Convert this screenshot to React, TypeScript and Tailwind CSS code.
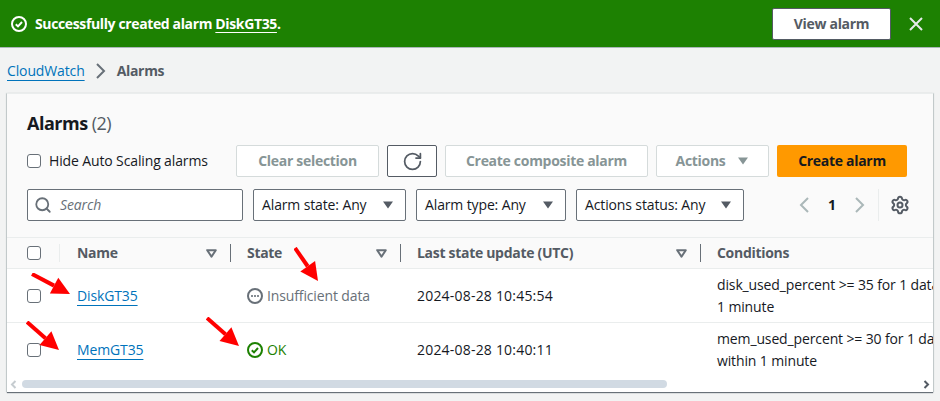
import { RotateCw, Search, Settings } from 'lucide-react';

const font = { fontFamily: '"Open Sans", "Noto Sans", sans-serif' };

function CheckBox() {
  return <span className="block w-[14px] h-[14px] rounded-[3px] border border-[#687078] bg-white" />;
}

function Caret({ className }: { className: string }) {
  return (
    <svg width="12" height="10" viewBox="0 0 12 10" className={className}>
      <path d="M1 1.5h10L6 8.5z" fill="currentColor" />
    </svg>
  );
}

function SortCaret() {
  return (
    <svg width="11" height="9" viewBox="0 0 11 9" className="text-[#687078]">
      <path d="M1.2 1.2h8.6L5.5 7.6z" fill="none" stroke="currentColor" strokeWidth="2" strokeLinejoin="round" />
    </svg>
  );
}

function Chevron({ dir, className }: { dir: 'left' | 'right'; className: string }) {
  return (
    <svg width="10" height="16" viewBox="0 0 10 16" fill="none" stroke="currentColor" strokeWidth="2" className={className}>
      <path d={dir === 'left' ? 'M9 1L2 8l7 7' : 'M1 1l7 7-7 7'} />
    </svg>
  );
}

function FilterSelect({ label, width }: { label: string; width: string }) {
  return (
    <div className={`${width} h-8 flex items-center justify-between pl-2 pr-[11px] bg-white border border-[#687078] rounded-[2px] text-[#16191f]`}>
      <span>{label}</span>
      <Caret className="text-[#545b64]" />
    </div>
  );
}

function HeaderCell({ title, sort = true }: { title: string; sort?: boolean }) {
  return (
    <div className="relative flex items-center justify-between pl-[17px] pr-[13px] font-bold tracking-[-0.3px] text-[#545b64]">
      <span className="absolute left-0 top-[6px] h-[18px] w-px bg-[#687078]" />
      <span>{title}</span>
      {sort && <SortCaret />}
    </div>
  );
}

// red annotation arrows drawn on top of the screenshot
function Arrow({ className, x, y }: { className: string; x: number; y: number }) {
  const len = Math.hypot(x, y);
  const ux = x / len;
  const uy = y / len;
  const bx = x - ux * 18;
  const by = y - uy * 18;
  return (
    <svg width="60" height="60" viewBox="0 0 60 60" className={`absolute ${className}`}>
      <line x1="1" y1="1" x2={1 + bx} y2={1 + by} stroke="#f00" strokeWidth="4" />
      <polygon
        points={`${1 + x},${1 + y} ${1 + bx - uy * 9},${1 + by + ux * 9} ${1 + bx + uy * 9},${1 + by - ux * 9}`}
        fill="#f00"
      />
    </svg>
  );
}

export default function App() {
  return (
    <div style={font} className="relative w-[940px] h-[401px] overflow-hidden bg-[#f2f3f3] text-[14px] leading-[22px] tracking-[-0.13px] text-[#16191f]">
      <div className="h-[48px] flex items-center pl-[11px] pr-[17px] bg-[#1d8102] border-b border-[#aab7b8] text-white font-bold">
        <svg width="16" height="16" viewBox="0 0 16 16" fill="none" stroke="currentColor" strokeWidth="2">
          <circle cx="8" cy="8" r="7" />
          <path d="M4.8 8.2l2.2 2.2 4-4.4" />
        </svg>
        <span className="ml-2 tracking-[-0.37px]">
          Successfully created alarm <span className="underline underline-offset-[3px]">DiskGT35</span>.
        </span>
        <span className="ml-auto w-[119px] h-8 flex items-center justify-center bg-white border border-[#545b64] rounded-[2px] text-[#545b64] tracking-[-0.3px]">
          View alarm
        </span>
        <svg width="14" height="14" viewBox="0 0 14 14" fill="none" stroke="currentColor" strokeWidth="2" className="ml-[18px] text-[#e6eaea]">
          <path d="M1 1l12 12M13 1L1 13" />
        </svg>
      </div>

      <div className="h-[45px] flex items-center pl-[7px] text-[#545b64]">
        <span className="text-[#0073bb] underline underline-offset-[4px]">CloudWatch</span>
        <Chevron dir="right" className="mx-[11px] text-[#687078]" />
        <span className="font-bold tracking-[-0.3px]">Alarms</span>
      </div>

      <div className="mx-[7px] h-[299px] bg-[#fafafa] border-t border-[#eaeded] shadow-[0_1px_1px_0_#687078,1px_0_1px_0_#d5dbdb,-1px_0_1px_0_#d5dbdb] overflow-hidden">
        <div className="h-[143px] pl-5 pr-[26px] pt-[17px]">
          <div className="h-[24px] text-[18px] leading-[24px] font-bold tracking-[-0.5px]">
            Alarms <span className="font-normal text-[#545b64]">(2)</span>
          </div>
          <div className="mt-[10px] h-8 flex items-center">
            <CheckBox />
            <span className="ml-2 text-[#16191f]">Hide Auto Scaling alarms</span>
            <div className="ml-auto flex items-center gap-2 font-bold tracking-[-0.3px] text-[#879596]">
              <span className="w-[143px] h-8 flex items-center justify-center bg-white border border-[#d5dbdb] rounded-[2px]">Clear selection</span>
              <span className="w-[50px] h-8 flex items-center justify-center bg-white border border-[#545b64] rounded-[2px] text-[#545b64]">
                <RotateCw size={21} strokeWidth={2} />
              </span>
              <span className="w-[203px] h-8 flex items-center justify-center bg-white border border-[#d5dbdb] rounded-[2px]">Create composite alarm</span>
              <span className="w-[113px] h-8 flex items-center justify-center gap-[12px] bg-white border border-[#d5dbdb] rounded-[2px]">
                Actions <Caret className="text-[#879596]" />
              </span>
              <span className="w-[130px] h-8 flex items-center justify-center bg-[#ff9900] rounded-[2px] text-[#16191f]">Create alarm</span>
            </div>
          </div>
          <div className="mt-3 h-8 flex items-center">
            <div className="w-[216px] h-8 flex items-center pl-[6px] bg-white border border-[#687078] rounded-[2px]">
              <Search size={18} strokeWidth={2.4} className="text-[#687078]" />
              <span className="ml-[8px] italic text-[#687078]">Search</span>
            </div>
            <div className="ml-[10px] flex gap-[10px]">
              <FilterSelect label="Alarm state: Any" width="w-[153px]" />
              <FilterSelect label="Alarm type: Any" width="w-[150px]" />
              <FilterSelect label="Actions status: Any" width="w-[168px]" />
            </div>
            <div className="ml-auto -mr-[3px] flex items-center">
              <Chevron dir="left" className="text-[#aab7b8]" />
              <span className="w-[46px] text-center font-bold">1</span>
              <Chevron dir="right" className="text-[#aab7b8]" />
              <span className="ml-[13px] mr-[11px] w-px h-8 bg-[#eaeded]" />
              <Settings size={20} strokeWidth={2.4} className="text-[#545b64]" />
            </div>
          </div>
        </div>

        <div className="grid grid-cols-[53px_170px_170px_300px_233px] h-[32px] border-t border-[#eaeded] border-b items-stretch">
          <div className="relative flex items-center pl-5">
            <CheckBox />
            <span className="absolute right-0 top-[6px] h-[18px] w-px bg-[#eaeded]" />
          </div>
          <div className="relative flex items-center justify-between pl-[17px] pr-[13px] font-bold tracking-[-0.3px] text-[#545b64]">
            <span>Name</span>
            <SortCaret />
          </div>
          <HeaderCell title="State" />
          <HeaderCell title="Last state update (UTC)" />
          <HeaderCell title="Conditions" sort={false} />
        </div>

        <div className="bg-white">
          <div className="grid grid-cols-[53px_170px_170px_300px_233px] h-[54px] border-b border-[#eaeded] items-center">
            <div className="pl-5"><CheckBox /></div>
            <div className="pl-[17px]"><span className="text-[#0073bb] underline underline-offset-[4px]">DiskGT35</span></div>
            <div className="pl-[17px] flex items-center text-[#687078]">
              <svg width="16" height="16" viewBox="0 0 16 16" fill="none" stroke="currentColor" strokeWidth="2">
                <circle cx="8" cy="8" r="7" />
                <path d="M4.2 8h1.6M7.2 8h1.6M10.2 8h1.6" />
              </svg>
              <span className="ml-1">Insufficient data</span>
            </div>
            <div className="pl-[17px] tracking-[0.2px]">2024-08-28 10:45:54</div>
            <div className="pl-[17px] whitespace-nowrap">
              disk_used_percent &gt;= 35 for 1 datapoints within<br />1 minute
            </div>
          </div>
          <div className="grid grid-cols-[53px_170px_170px_300px_233px] h-[53px] items-center">
            <div className="pl-5"><CheckBox /></div>
            <div className="pl-[17px]"><span className="text-[#0073bb] underline underline-offset-[4px]">MemGT35</span></div>
            <div className="pl-[17px] flex items-center text-[#1d8102]">
              <svg width="16" height="16" viewBox="0 0 16 16" fill="none" stroke="currentColor" strokeWidth="2">
                <circle cx="8" cy="8" r="7" />
                <path d="M4.8 8.2l2.2 2.2 4-4.4" />
              </svg>
              <span className="ml-1">OK</span>
            </div>
            <div className="pl-[17px] tracking-[0.2px]">2024-08-28 10:40:11</div>
            <div className="pl-[17px] whitespace-nowrap">
              mem_used_percent &gt;= 30 for 1 datapoints<br />within 1 minute
            </div>
          </div>
          <div className="h-[16px] flex items-center px-[3px]">
            <svg width="7" height="9" viewBox="0 0 7 9" fill="none" stroke="#c6ccd0" strokeWidth="2"><path d="M5.5 1L2 4.5 5.5 8" /></svg>
            <div className="ml-[5px] w-[645px] h-[8px] rounded-full bg-[#d1dae3]" />
            <svg width="7" height="9" viewBox="0 0 7 9" fill="none" stroke="#545b64" strokeWidth="2" className="ml-auto"><path d="M1.5 1L5 4.5 1.5 8" /></svg>
          </div>
        </div>
      </div>

      <Arrow className="left-[294px] top-[247px]" x={23} y={33} />
      <Arrow className="left-[31px] top-[273px]" x={38} y={20} />
      <Arrow className="left-[26px] top-[321px]" x={32} y={28} />
      <Arrow className="left-[206px] top-[317px]" x={32} y={28} />
    </div>
  );
}
